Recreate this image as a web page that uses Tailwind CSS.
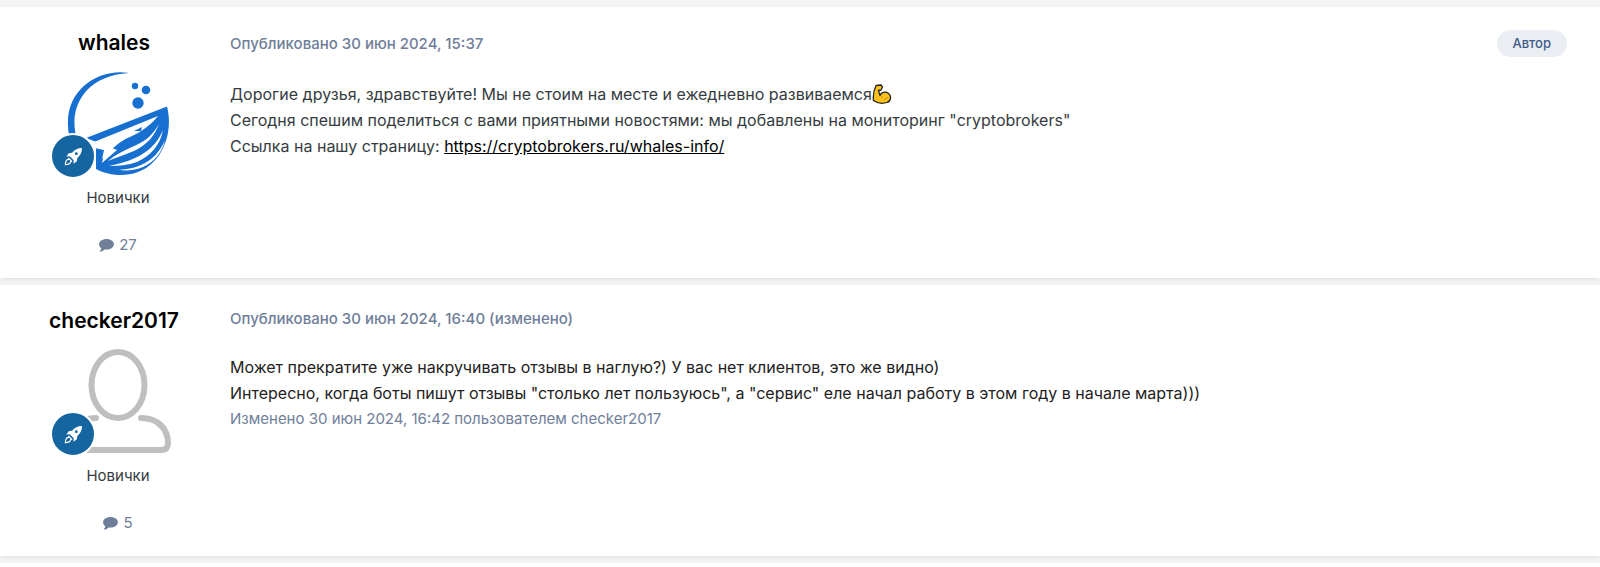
<!DOCTYPE html>
<html lang="ru">
<head>
  <meta charset="UTF-8" />
  <meta name="viewport" content="width=device-width, initial-scale=1.0"/>
  <title>Обсуждение - whales</title>
  <!-- Tailwind CSS CDN -->
  <script src="https://cdn.jsdelivr.net/npm/@tailwindcss/browser@4"></script>
</head>
<body class="bg-white font-['Inter',sans-serif] text-[#353c41]">
  <!-- Общие иконки -->
  <svg class="hidden" aria-hidden="true">
    <symbol id="rocket" viewBox="0 0 20 20">
      <path fill="#fff" d="M19 1C14.500 1 11 3 8.500 6L5 6.500 2.500 10l3.500-.3L10.200 14 10 17.500l3.500-2.500.5-3.500C17 9 19 5.500 19 1Z"/>
      <circle cx="13" cy="7" r="1.500" fill="#1565a0"/>
      <path fill="none" stroke="#fff" stroke-width="1.200" d="M5 13c-2 0-3.500 2.500-3.600 5.600C4.500 18.500 7 17 7 15M4.500 11.500l4 4"/>
    </symbol>
    <symbol id="comment" viewBox="0 0 16 14">
      <path d="M8 0c4.400 0 8 2.500 8 5.700s-3.600 5.700-8 5.700c-.7 0-1.400-.1-2-.2C4.700 12.400 3 13.300 1 13.500c-.3 0-.4-.3-.2-.5.9-.9 1.500-1.700 1.700-2.800C1 9.100 0 7.500 0 5.700 0 2.500 3.600 0 8 0Z"/>
    </symbol>
  </svg>

  <main class="flex flex-col gap-[7px] bg-[#f4f4f4] py-[7px]">
    <!-- Сообщение 1 -->
    <article class="flex min-h-[271px] bg-white shadow-[0_2px_4px_-1px_rgba(0,0,0,0.1)]">
      <aside class="flex w-[228px] shrink-0 flex-col items-center pt-[22px]">
        <h3 class="text-[21px] leading-[28px] font-semibold text-black"><a href="#">whales</a></h3>
        <div class="relative ml-[10px] mt-[14px] size-[106px]">
          <svg class="size-full" viewBox="0 0 106 106" role="img" aria-label="whales">
            <path fill="#176fd0" d="M63 2C33-3 0 18 2 55c0 7 2 12 3 16l6-3C2 40 16 5 63 2Z"/>
            <circle cx="69" cy="15" r="3.200" fill="#176fd0"/>
            <circle cx="80" cy="19" r="4.300" fill="#176fd0"/>
            <circle cx="72" cy="32" r="5.700" fill="#176fd0"/>
            <path fill="#176fd0" d="M20 67 101 35.500C109 66 92 104 56 104c-10 0-18-2-26-6V77l9 2-3 13 15-13Z"/>
            <path fill="#fff" d="M28 71 92 45C85 54 75 61 64 66c-10 4-16 10-28 22l2-9-9-2Z"/>
            <path fill="#fff" d="M93 53C85 67 77 71 66 76 57 80 49 84 42 90 54 85 61 83 70 79 81 73 88 66 93 53Z"/>
            <path fill="#fff" d="M97 59C91 73 82 81 69 87 60 91 52 93 43 95 54 95 62 94 71 91 84 85 94 75 97 59Z"/>
            <path fill="#fff" d="M99 69C94 81 86 89 75 94 68 97 62 98 53 99 62 100 70 99 77 96 88 91 96 82 99 69Z"/>
            <path fill="#176fd0" d="m68 60 8-4-1 4Z"/>
          </svg>
          <a href="#" aria-label="Новичок" class="absolute -bottom-[2px] -left-4 flex size-[46px] items-center justify-center rounded-full border-2 border-white bg-[#1565a0]">
            <svg class="size-[19px]"><use href="#rocket"/></svg>
          </a>
        </div>
        <p class="ml-2 mt-[10px] text-[15px] leading-[22px]">Новички</p>
        <a href="#" class="ml-2 mt-[25px] flex items-center gap-[5px] text-[15px] leading-[22px] text-[#6f7e99]">
          <svg class="h-[13px] w-[15px] fill-current"><use href="#comment"/></svg>
          27
        </a>
      </aside>
      <div class="min-w-0 flex-1 pt-[23px] pr-[33px] pl-0.5">
        <header class="flex items-center justify-between">
          <a href="#" class="text-[15px] leading-[22px] font-medium text-[#6f7e99]">Опубликовано 30 июн 2024, 15:37</a>
          <span class="rounded-full bg-[#ebeef3] px-4 text-[13px] leading-[27px] font-medium text-[#3d5a8c]">Автор</span>
        </header>
        <div class="mt-6 text-base leading-[26px]">
          <p>Дорогие друзья, здравствуйте! Мы не стоим на месте и ежедневно развиваемся<svg class="inline-block size-5 align-[-4px]" viewBox="0 0 20 20" role="img" aria-label="Сила"><path fill="#fcc21b" stroke="#222" stroke-width="1.300" stroke-linejoin="round" d="M4 1.500 9 1l1.500 2L9 6 6.500 6.500l1.500 5c1-3 5-4.500 8-2.500 4 3 3 8-1 9.500-5 1.500-10 .5-13.500-2C1 13 2 6 4 1.500Z"/><path fill="none" stroke="#c98b10" d="M9 12c1 1 1 1 2 1M12 15c2 0 3-1 4-2"/></svg></p>
          <p>Сегодня спешим поделиться с вами приятными новостями: мы добавлены на мониторинг "cryptobrokers"</p>
          <p>Ссылка на нашу страницу: <a href="#" class="text-black underline">https://cryptobrokers.ru/whales-info/</a></p>
        </div>
      </div>
    </article>

    <!-- Сообщение 2 -->
    <article class="flex min-h-[271px] bg-white shadow-[0_2px_4px_-1px_rgba(0,0,0,0.1)]">
      <aside class="flex w-[228px] shrink-0 flex-col items-center pt-[22px]">
        <h3 class="text-[21px] leading-[28px] font-semibold text-black"><a href="#">checker2017</a></h3>
        <div class="relative ml-[10px] mt-[14px] size-[106px]">
          <svg class="size-full" viewBox="0 0 106 106" fill="none" stroke="#bfbfbf" stroke-width="6" stroke-linecap="round" role="img" aria-label="checker2017">
            <ellipse cx="52" cy="36" rx="26.500" ry="33"/>
            <path d="M30 69C14 69 4 80 4 94q0 7 7 7h84q7 0 7-7C102 80 92 69 75 69"/>
          </svg>
          <a href="#" aria-label="Новичок" class="absolute -bottom-[2px] -left-4 flex size-[46px] items-center justify-center rounded-full border-2 border-white bg-[#1565a0]">
            <svg class="size-[19px]"><use href="#rocket"/></svg>
          </a>
        </div>
        <p class="ml-2 mt-[10px] text-[15px] leading-[22px]">Новички</p>
        <a href="#" class="ml-2 mt-[25px] flex items-center gap-[5px] text-[15px] leading-[22px] text-[#6f7e99]">
          <svg class="h-[13px] w-[15px] fill-current"><use href="#comment"/></svg>
          5
        </a>
      </aside>
      <div class="min-w-0 flex-1 pt-[23px] pr-[33px] pl-0.5">
        <header class="flex items-center justify-between">
          <a href="#" class="text-[15px] leading-[22px] font-medium text-[#6f7e99]">Опубликовано 30 июн 2024, 16:40 (изменено)</a>
        </header>
        <div class="mt-6 text-base leading-[26px] text-[#222]">
          <p>Может прекратите уже накручивать отзывы в наглую?) У вас нет клиентов, это же видно)</p>
          <p>Интересно, когда боты пишут отзывы "столько лет пользуюсь", а "сервис" еле начал работу в этом году в начале марта)))</p>
          <p class="text-[15px] text-[#6f7e99]">Изменено 30 июн 2024, 16:42 пользователем checker2017</p>
        </div>
      </div>
    </article>
  </main>
</body>
</html>
